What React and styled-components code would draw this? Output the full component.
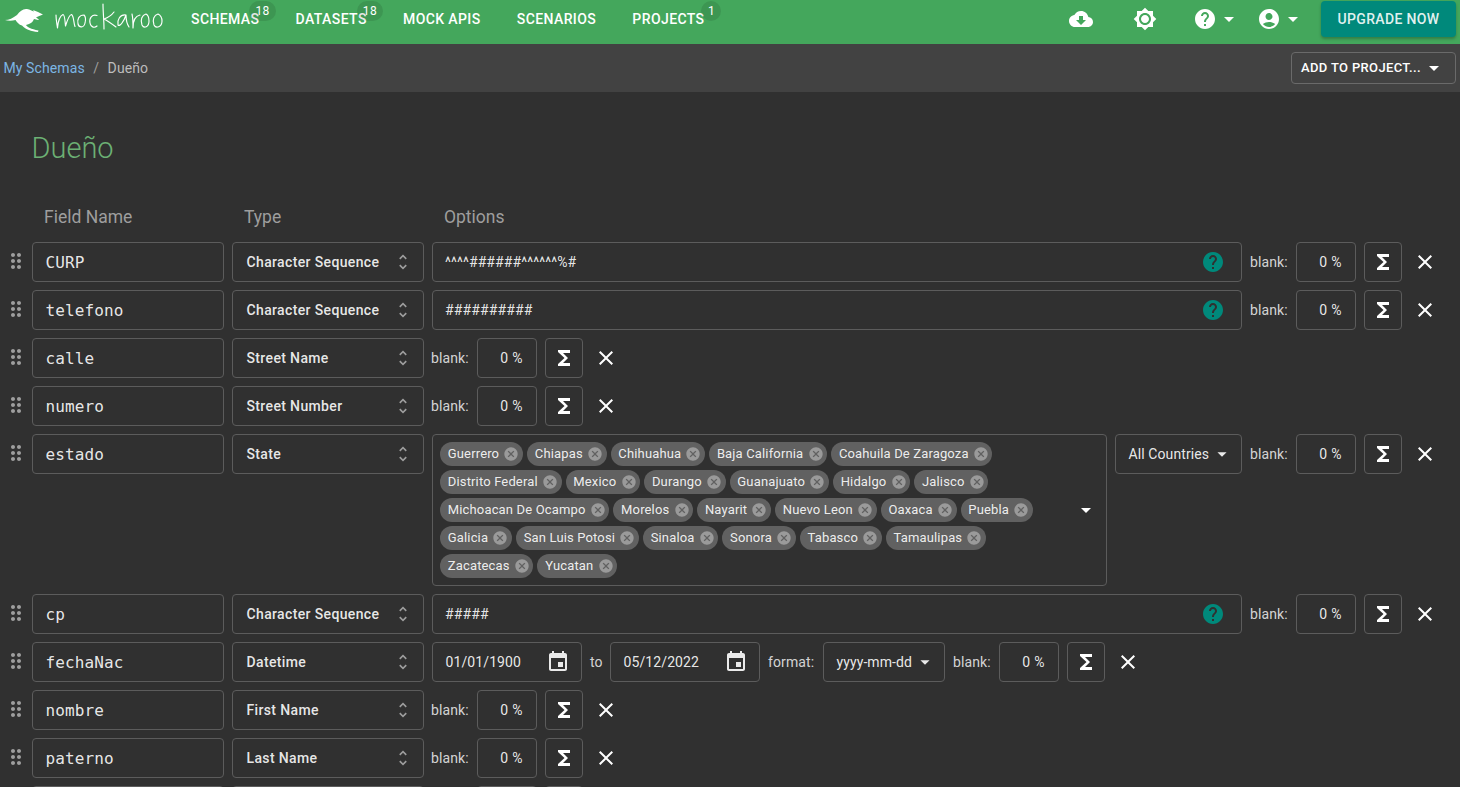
import React from "react";
import styled, { createGlobalStyle } from "styled-components";

const P = {
  cloud: "M19.35 10.04C18.67 6.59 15.64 4 12 4 9.11 4 6.6 5.64 5.35 8.04 2.34 8.36 0 10.91 0 14c0 3.31 2.69 6 6 6h13c2.76 0 5-2.24 5-5 0-2.64-2.05-4.78-4.65-4.96zM17 13l-5 5-5-5h3V9h4v4h3z",
  bright: "M20 8.69V4h-4.69L12 .69 8.69 4H4v4.69L.69 12 4 15.31V20h4.69L12 23.31 15.31 20H20v-4.69L23.31 12 20 8.69zM12 18c-3.31 0-6-2.69-6-6s2.69-6 6-6 6 2.69 6 6-2.69 6-6 6zm0-10c-2.21 0-4 1.79-4 4s1.79 4 4 4 4-1.79 4-4-1.79-4-4-4z",
  help: "M12 2C6.48 2 2 6.48 2 12s4.48 10 10 10 10-4.48 10-10S17.52 2 12 2zm1 17h-2v-2h2v2zm2.07-7.75l-.9.92C13.45 12.9 13 13.5 13 15h-2v-.5c0-1.1.45-2.1 1.17-2.83l1.24-1.26c.37-.36.59-.86.59-1.41 0-1.1-.9-2-2-2s-2 .9-2 2H8c0-2.21 1.79-4 4-4s4 1.79 4 4c0 .88-.36 1.68-.93 2.25z",
  account: "M12 2C6.48 2 2 6.48 2 12s4.48 10 10 10 10-4.48 10-10S17.52 2 12 2zm0 4c1.93 0 3.5 1.57 3.5 3.5S13.93 13 12 13s-3.5-1.57-3.5-3.5S10.07 6 12 6zm0 14c-2.03 0-4.43-.82-6.14-2.88C7.55 15.8 9.68 15 12 15s4.45.8 6.14 2.12C16.43 19.18 14.03 20 12 20z",
  event: "M17 12h-5v5h5v-5zM16 1v2H8V1H6v2H5c-1.11 0-1.99.9-1.99 2L3 19c0 1.1.89 2 2 2h14c1.1 0 2-.9 2-2V5c0-1.1-.9-2-2-2h-1V1h-2zm3 18H5V8h14v11z",
  drag: "M11 18c0 1.1-.9 2-2 2s-2-.9-2-2 .9-2 2-2 2 .9 2 2zm-2-8c-1.1 0-2 .9-2 2s.9 2 2 2 2-.9 2-2-.9-2-2-2zm0-6c-1.1 0-2 .9-2 2s.9 2 2 2 2-.9 2-2-.9-2-2-2zm6 4c1.1 0 2-.9 2-2s-.9-2-2-2-2 .9-2 2 .9 2 2 2zm0 2c-1.1 0-2 .9-2 2s.9 2 2 2 2-.9 2-2-.9-2-2-2zm0 6c-1.1 0-2 .9-2 2s.9 2 2 2 2-.9 2-2-.9-2-2-2z",
  unfold: "M12 5.83L15.17 9l1.41-1.41L12 3 7.41 7.59 8.83 9 12 5.83zm0 12.34L8.83 15l-1.41 1.41L12 21l4.59-4.59L15.17 15 12 18.17z",
  close: "M19 6.41L17.59 5 12 10.59 6.41 5 5 6.41 10.59 12 5 17.59 6.41 19 12 13.41 17.59 19 19 17.59 13.41 12z",
  cancel: "M12 2C6.47 2 2 6.47 2 12s4.47 10 10 10 10-4.47 10-10S17.53 2 12 2zm5 13.59L15.59 17 12 13.41 8.41 17 7 15.59 10.59 12 7 8.41 8.41 7 12 10.59 15.59 7 17 8.41 13.41 12 17 15.59z",
  sigma: "M18 4H6v2l6.5 6L6 18v2h12v-3h-7l5-5-5-5h7z",
  arrow: "M7 10l5 5 5-5z",
};

const Global = createGlobalStyle`
  html, body { margin: 0; padding: 0; height: 787px; overflow: hidden; background: #303030; }
  body { font-family: Roboto, "Liberation Sans", sans-serif; color: #fff; }
  * { box-sizing: border-box; }
`;

const Glyph = styled.svg`
  display: block;
  flex: none;
  fill: ${(p) => p.$color || "currentColor"};
`;
const Icon = ({ d, size = 24, color }) => (
  <Glyph viewBox="0 0 24 24" width={size} height={size} $color={color}>
    <path d={d} />
  </Glyph>
);

const Nav = styled.header`
  height: 44px;
  background: #44a75c;
  display: flex;
  align-items: flex-start;
  padding-right: 4px;
`;
const LogoBox = styled.div`
  width: 191px;
  height: 44px;
  flex: none;
`;
const NavLinks = styled.nav`
  display: flex;
  gap: 36.2px;
  height: 38px;
  align-items: center;
`;
const NavLink = styled.a`
  position: relative;
  font-size: 14px;
  font-weight: 500;
  letter-spacing: 0.4px;
  color: #fff;
  white-space: nowrap;
`;
const Badge = styled.span`
  position: absolute;
  left: calc(100% - ${(p) => (p.$wide ? 10 : 3)}px);
  top: -10px;
  min-width: ${(p) => (p.$wide ? 26 : 20)}px;
  height: 20px;
  padding: 0 6px;
  border-radius: 10px;
  background: rgba(0, 0, 0, 0.1);
  font-size: 12px;
  font-weight: 400;
  line-height: 20px;
  text-align: center;
`;
const NavTools = styled.div`
  margin-left: auto;
  display: flex;
  align-items: center;
  height: 38px;
`;
const Tool = styled.span`
  display: flex;
  color: #fff;
  margin-right: ${(p) => p.$after}px;
`;
const Upgrade = styled.a`
  height: 36px;
  width: 135px;
  border-radius: 4px;
  background: #00897b;
  box-shadow: 0 2px 3px rgba(0, 0, 0, 0.25);
  color: rgba(255, 255, 255, 0.9);
  font-size: 14px;
  font-weight: 500;
  letter-spacing: 0.35px;
  display: flex;
  align-items: center;
  justify-content: center;
`;

const Crumbs = styled.div`
  height: 48px;
  background: #424242;
  display: flex;
  align-items: center;
  padding: 0 4px 0 3.5px;
  font-size: 14px;
  letter-spacing: 0.1px;
  color: #bdbdbd;
`;
const CrumbLink = styled.a`
  color: #7cb6e4;
`;
const CrumbSep = styled.span`
  margin: 0 8.5px;
  color: #9e9e9e;
`;
const AddButton = styled.button`
  margin-left: auto;
  width: 165px;
  height: 32px;
  padding: 0 9px 1px 9px;
  display: flex;
  align-items: center;
  justify-content: space-between;
  background: transparent;
  border: 1px solid #6a6a6a;
  border-radius: 4px;
  color: #fff;
  font-family: inherit;
  font-size: 13px;
  font-weight: 500;
  letter-spacing: 0.35px;
  white-space: nowrap;
`;

const Main = styled.main`
  padding: 0 0 0 32px;
`;
const Title = styled.h1`
  margin: 0 0 0 -0.5px;
  padding-top: 37px;
  height: 107px;
  font-size: 29px;
  line-height: 38px;
  font-weight: 300;
  color: #6cb074;
`;
const Heads = styled.div`
  display: flex;
  height: 43px;
  padding-top: 6px;
  font-size: 17.5px;
  line-height: 24px;
  color: #9e9e9e;
`;
const Head = styled.div`
  width: 200px;
  padding-left: 12px;
`;
const Row = styled.div`
  position: relative;
  display: flex;
  align-items: flex-start;
  gap: 8px;
  margin-bottom: 8px;
`;
const Handle = styled.span`
  position: absolute;
  left: -28px;
  top: 7px;
  color: #9e9e9e;
`;
const Box = styled.div`
  height: 40px;
  flex: none;
  border: 1px solid #5c5c5c;
  border-radius: 4px;
  display: flex;
  align-items: center;
  white-space: nowrap;
  color: rgba(255, 255, 255, 0.9);
  width: ${(p) => p.$w}px;
`;
const NameField = styled(Box)`
  width: 192px;
  padding-left: 12.5px;
  font-family: "DejaVu Sans Mono", monospace;
  font-size: 16px;
  letter-spacing: 0.12px;
`;
const TypeSelect = styled(Box)`
  width: 192px;
  padding: 0 10px 0 13.5px;
  justify-content: space-between;
  font-size: 14px;
  font-weight: 500;
  letter-spacing: 0.36px;
`;
const OptionsField = styled(Box)`
  width: 810px;
  padding: 0 16px 0 12px;
  justify-content: space-between;
  font-size: 14px;
  letter-spacing: 0.12px;
`;
const PlainSelect = styled(Box)`
  padding: 0 8px 0 12.5px;
  justify-content: space-between;
  font-size: 14px;
  letter-spacing: 0.1px;
`;
const DateField = styled(Box)`
  width: 150px;
  padding: 0 11px 0 12.5px;
  justify-content: space-between;
  font-size: 14px;
  letter-spacing: 0.1px;
`;
const Label = styled.span`
  flex: none;
  height: 40px;
  width: ${(p) => p.$w}px;
  line-height: 40px;
  font-size: 14px;
  letter-spacing: 0.1px;
  white-space: nowrap;
  color: rgba(255, 255, 255, 0.8);
  margin-left: ${(p) => (p.$tight ? -1 : 0)}px;
`;
const Percent = styled(Box)`
  width: 60px;
  justify-content: flex-end;
  padding-right: 13px;
  font-size: 14px;
  letter-spacing: 0.4px;
  white-space: pre;
`;
const SumButton = styled(Box)`
  width: 38px;
  justify-content: center;
  color: #fff;
`;
const Remove = styled.span`
  display: flex;
  height: 40px;
  align-items: center;
  margin-left: 3px;
  color: #fff;
`;
const ChipBox = styled.div`
  width: 675px;
  flex: none;
  height: 152px;
  border: 1px solid #5c5c5c;
  border-radius: 4px;
  padding: 7px 36px 7px 7px;
  position: relative;
  display: flex;
  flex-wrap: wrap;
  align-content: flex-start;
  gap: 4px;
`;
const ChipCaret = styled.span`
  position: absolute;
  right: 8px;
  top: 63px;
  display: flex;
`;
const Chip = styled.span`
  height: 24px;
  border-radius: 12px;
  background: #616161;
  padding: 0 3.6px 0 7.8px;
  display: inline-flex;
  align-items: center;
  gap: 4.2px;
  font-size: 13px;
  line-height: 23px;
  letter-spacing: 0.15px;
  color: rgba(255, 255, 255, 0.9);
`;
const ChipText = styled.span`
  height: 23px;
  align-self: flex-start;
`;

const Blank = ({ tight }) => (
  <>
    <Label $w={38} $tight={tight}>blank:</Label>
    <Percent>0 %</Percent>
    <SumButton><Icon d={P.sigma} /></SumButton>
    <Remove><Icon d={P.close} /></Remove>
  </>
);

const Option = ({ value }) => (
  <OptionsField>
    <span>{value}</span>
    <Icon d={P.help} color="#00897b" />
  </OptionsField>
);

const STATES = ["Guerrero", "Chiapas", "Chihuahua", "Baja California", "Coahuila De Zaragoza", "Distrito Federal", "Mexico", "Durango", "Guanajuato", "Hidalgo", "Jalisco", "Michoacan De Ocampo", "Morelos", "Nayarit", "Nuevo Leon", "Oaxaca", "Puebla", "Galicia", "San Luis Potosi", "Sinaloa", "Sonora", "Tabasco", "Tamaulipas", "Zacatecas", "Yucatan"];

const Field = ({ name, type, children }) => (
  <Row>
    <Handle><Icon d={P.drag} /></Handle>
    <NameField>{name}</NameField>
    <TypeSelect>{type}<Icon d={P.unfold} size={20} color="#9e9e9e" /></TypeSelect>
    {children}
  </Row>
);

const NextRowEdge = () => (
  <Row>
    <NameField />
    <TypeSelect />
    <Label $w={38} $tight />
    <Percent />
    <SumButton />
  </Row>
);

const Logo = () => (
  <svg width="170" height="44" viewBox="0 0 170 44">
    <path fill="#fff" d="M5 20C9 20 13 18 17 15C20 11 23 8.5 27 9C30 9.5 32 11 34 11.5L33 10L38 12L43 14.5L38 16.5L36 17.5L39 19.5L38 20L34 19C33 21 32 23 29 24L26 25C27 27 31 29 38.5 30.5L38 32C31 31.5 26 29.5 22 25.5C19 25 17 22 15.5 20C12 21 8 21 5 20Z" />
    <g fill="none" stroke="#fff" strokeWidth="1.15" strokeLinecap="round" strokeLinejoin="round">
      <path d="M56 15C56 20 57 24 57.5 28C58 22 60 16 63 14.5C65 15 65 22 65.5 26C67 21 69 15 71.5 14.5C74 16 73.5 23 75 26.5" />
      <path d="M84 15C79 15 77 19 78 24C79 28 84 28 85 23C86 19 85 16 84 15Z" />
      <path d="M97 15.5C92 14 89 18 90 23C91 28 95 28 97 26" />
      <path d="M103 4C103 12 104 20 104 29" />
      <path d="M114 12C111 16 107 18 104 19C108 21 112 24 116 27" />
      <path d="M126 15C120 14 117 20 118 25C120 27 124 21 126 15C126 19 127 24 129 27" />
      <path d="M132 14C133 18 133 23 133 28C133 21 135 16 140 15" />
      <path d="M146 14C142 15 140 20 142 25C144 29 149 27 149 21C149 17 148 15 146 14Z" />
      <path d="M158 14C154 15 152 20 154 25C156 29 162 27 162 21C162 17 160 15 158 14Z" />
    </g>
  </svg>
);

export default function App() {
  return (
    <>
      <Global />
      <Nav>
        <LogoBox><Logo /></LogoBox>
        <NavLinks>
          <NavLink>SCHEMAS<Badge $wide>18</Badge></NavLink>
          <NavLink>DATASETS<Badge $wide>18</Badge></NavLink>
          <NavLink>MOCK APIS</NavLink>
          <NavLink>SCENARIOS</NavLink>
          <NavLink>PROJECTS<Badge>1</Badge></NavLink>
        </NavLinks>
        <NavTools>
          <Tool $after={40}><Icon d={P.cloud} /></Tool>
          <Tool $after={36}><Icon d={P.bright} /></Tool>
          <Tool $after={0}><Icon d={P.help} /></Tool>
          <Tool $after={16}><Icon d={P.arrow} /></Tool>
          <Tool $after={0}><Icon d={P.account} /></Tool>
          <Tool $after={16}><Icon d={P.arrow} /></Tool>
          <Upgrade>UPGRADE NOW</Upgrade>
        </NavTools>
      </Nav>
      <Crumbs>
        <CrumbLink>My Schemas</CrumbLink>
        <CrumbSep>/</CrumbSep>
        <span>Dueño</span>
        <AddButton>ADD TO PROJECT...<Icon d={P.arrow} /></AddButton>
      </Crumbs>
      <Main>
        <Title>Dueño</Title>
        <Heads>
          <Head>Field Name</Head>
          <Head>Type</Head>
          <Head>Options</Head>
        </Heads>
        <Field name="CURP" type="Character Sequence"><Option value="^^^^######^^^^^^%#" /><Blank /></Field>
        <Field name="telefono" type="Character Sequence"><Option value="##########" /><Blank /></Field>
        <Field name="calle" type="Street Name"><Blank tight /></Field>
        <Field name="numero" type="Street Number"><Blank tight /></Field>
        <Field name="estado" type="State">
          <ChipBox>
            {STATES.map((s) => (
              <Chip key={s}><ChipText>{s}</ChipText><Icon d={P.cancel} size={16} color="#9a9a9a" /></Chip>
            ))}
            <ChipCaret><Icon d={P.arrow} /></ChipCaret>
          </ChipBox>
          <PlainSelect $w={127}>All Countries<Icon d={P.arrow} size={22} /></PlainSelect>
          <Blank />
        </Field>
        <Field name="cp" type="Character Sequence"><Option value="#####" /><Blank /></Field>
        <Field name="fechaNac" type="Datetime">
          <DateField>01/01/1900<Icon d={P.event} /></DateField>
          <Label $w={12}>to</Label>
          <DateField>05/12/2022<Icon d={P.event} /></DateField>
          <Label $w={47}>format:</Label>
          <PlainSelect $w={122}>yyyy-mm-dd<Icon d={P.arrow} size={22} /></PlainSelect>
          <Blank />
        </Field>
        <Field name="nombre" type="First Name"><Blank tight /></Field>
        <Field name="paterno" type="Last Name"><Blank tight /></Field>
        <NextRowEdge />
      </Main>
    </>
  );
}
